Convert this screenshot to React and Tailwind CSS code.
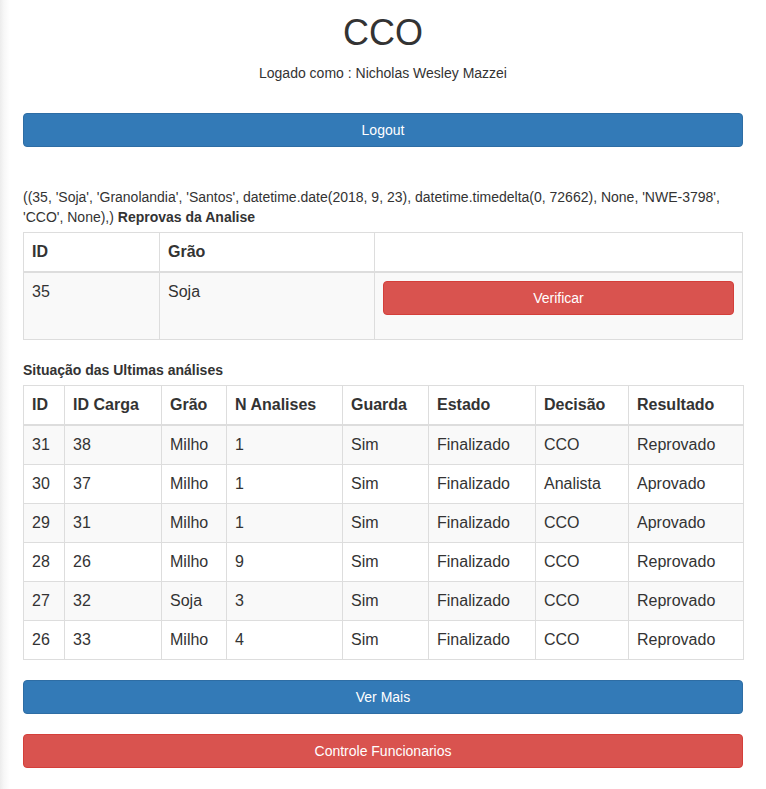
import React from "react";

const rows = [
  ["31", "38", "Milho", "1", "Sim", "Finalizado", "CCO", "Reprovado"],
  ["30", "37", "Milho", "1", "Sim", "Finalizado", "Analista", "Aprovado"],
  ["29", "31", "Milho", "1", "Sim", "Finalizado", "CCO", "Aprovado"],
  ["28", "26", "Milho", "9", "Sim", "Finalizado", "CCO", "Reprovado"],
  ["27", "32", "Soja", "3", "Sim", "Finalizado", "CCO", "Reprovado"],
  ["26", "33", "Milho", "4", "Sim", "Finalizado", "CCO", "Reprovado"],
];

const headers = [
  ["ID", "w-[41px]"],
  ["ID Carga", "w-[97px]"],
  ["Grão", "w-[65px]"],
  ["N Analises", "w-[116px]"],
  ["Guarda", "w-[86px]"],
  ["Estado", "w-[107px]"],
  ["Decisão", "w-[93px]"],
  ["Resultado", "w-[115px]"],
];

export default function App() {
  return (
    <div className="min-h-[789px] bg-[linear-gradient(to_right,#ececec_0px,#f7f7f7_4px,#ffffff_10px)] font-['Liberation_Sans',Arial,sans-serif] text-[#333] text-[14px] leading-[20px]">
      <div className="px-[23px] pt-[13px] pb-[21px]">
        <h1 className="text-center text-[36px] leading-[40px] font-normal">CCO</h1>
        <p className="text-center mt-[10px]">Logado como : Nicholas Wesley Mazzei</p>
        <button className="mt-[30px] w-full h-[34px] rounded-[4px] border border-[#2e6da4] bg-[#337ab7] text-white text-[14px] leading-[20px]">
          Logout
        </button>

        <p className="mt-[40px]">
          ((35, 'Soja', 'Granolandia', 'Santos', datetime.date(2018, 9, 23), datetime.timedelta(0, 72662), None, 'NWE-3798',
          'CCO', None),) <b>Reprovas da Analise</b>
        </p>

        <table className="mt-[5px] w-full table-fixed border-collapse border border-[#ddd] text-[16px] leading-[22px]">
          <thead>
            <tr>
              <th className="w-[136px] text-left font-bold px-[8px] py-[8px] border border-[#ddd] border-b-2">ID</th>
              <th className="w-[215px] text-left font-bold px-[8px] py-[8px] border border-[#ddd] border-b-2">Grão</th>
              <th className="text-left font-bold px-[8px] py-[8px] border border-[#ddd] border-b-2"></th>
            </tr>
          </thead>
          <tbody>
            <tr className="bg-[#f9f9f9]">
              <td className="align-top px-[8px] py-[8px] border border-[#ddd]">35</td>
              <td className="align-top px-[8px] py-[8px] border border-[#ddd]">Soja</td>
              <td className="align-top px-[8px] py-[8px] border border-[#ddd]">
                <div className="mb-[16px]">
                  <button className="w-full h-[34px] rounded-[4px] border border-[#d43f3a] bg-[#d9534f] text-white text-[14px] leading-[20px]">
                    Verificar
                  </button>
                </div>
              </td>
            </tr>
          </tbody>
        </table>

        <p className="mt-[20px] font-bold">Situação das Ultimas análises</p>

        <table className="mt-[5px] w-full table-fixed border-collapse border border-[#ddd] text-[16px] leading-[22px]">
          <thead>
            <tr>
              {headers.map(([h, w]) => (
                <th key={h} className={`${w} text-left font-bold px-[8px] py-[8px] border border-[#ddd] border-b-2`}>
                  {h}
                </th>
              ))}
            </tr>
          </thead>
          <tbody>
            {rows.map((r, i) => (
              <tr key={i} className={i % 2 === 0 ? "bg-[#f9f9f9]" : "bg-white"}>
                {r.map((c, j) => (
                  <td key={j} className="px-[8px] py-[8px] border border-[#ddd]">
                    {c}
                  </td>
                ))}
              </tr>
            ))}
          </tbody>
        </table>

        <button className="mt-[20px] w-full h-[34px] rounded-[4px] border border-[#2e6da4] bg-[#337ab7] text-white text-[14px] leading-[20px]">
          Ver Mais
        </button>
        <button className="mt-[20px] w-full h-[34px] rounded-[4px] border border-[#d43f3a] bg-[#d9534f] text-white text-[14px] leading-[20px]">
          Controle Funcionarios
        </button>
      </div>
    </div>
  );
}
